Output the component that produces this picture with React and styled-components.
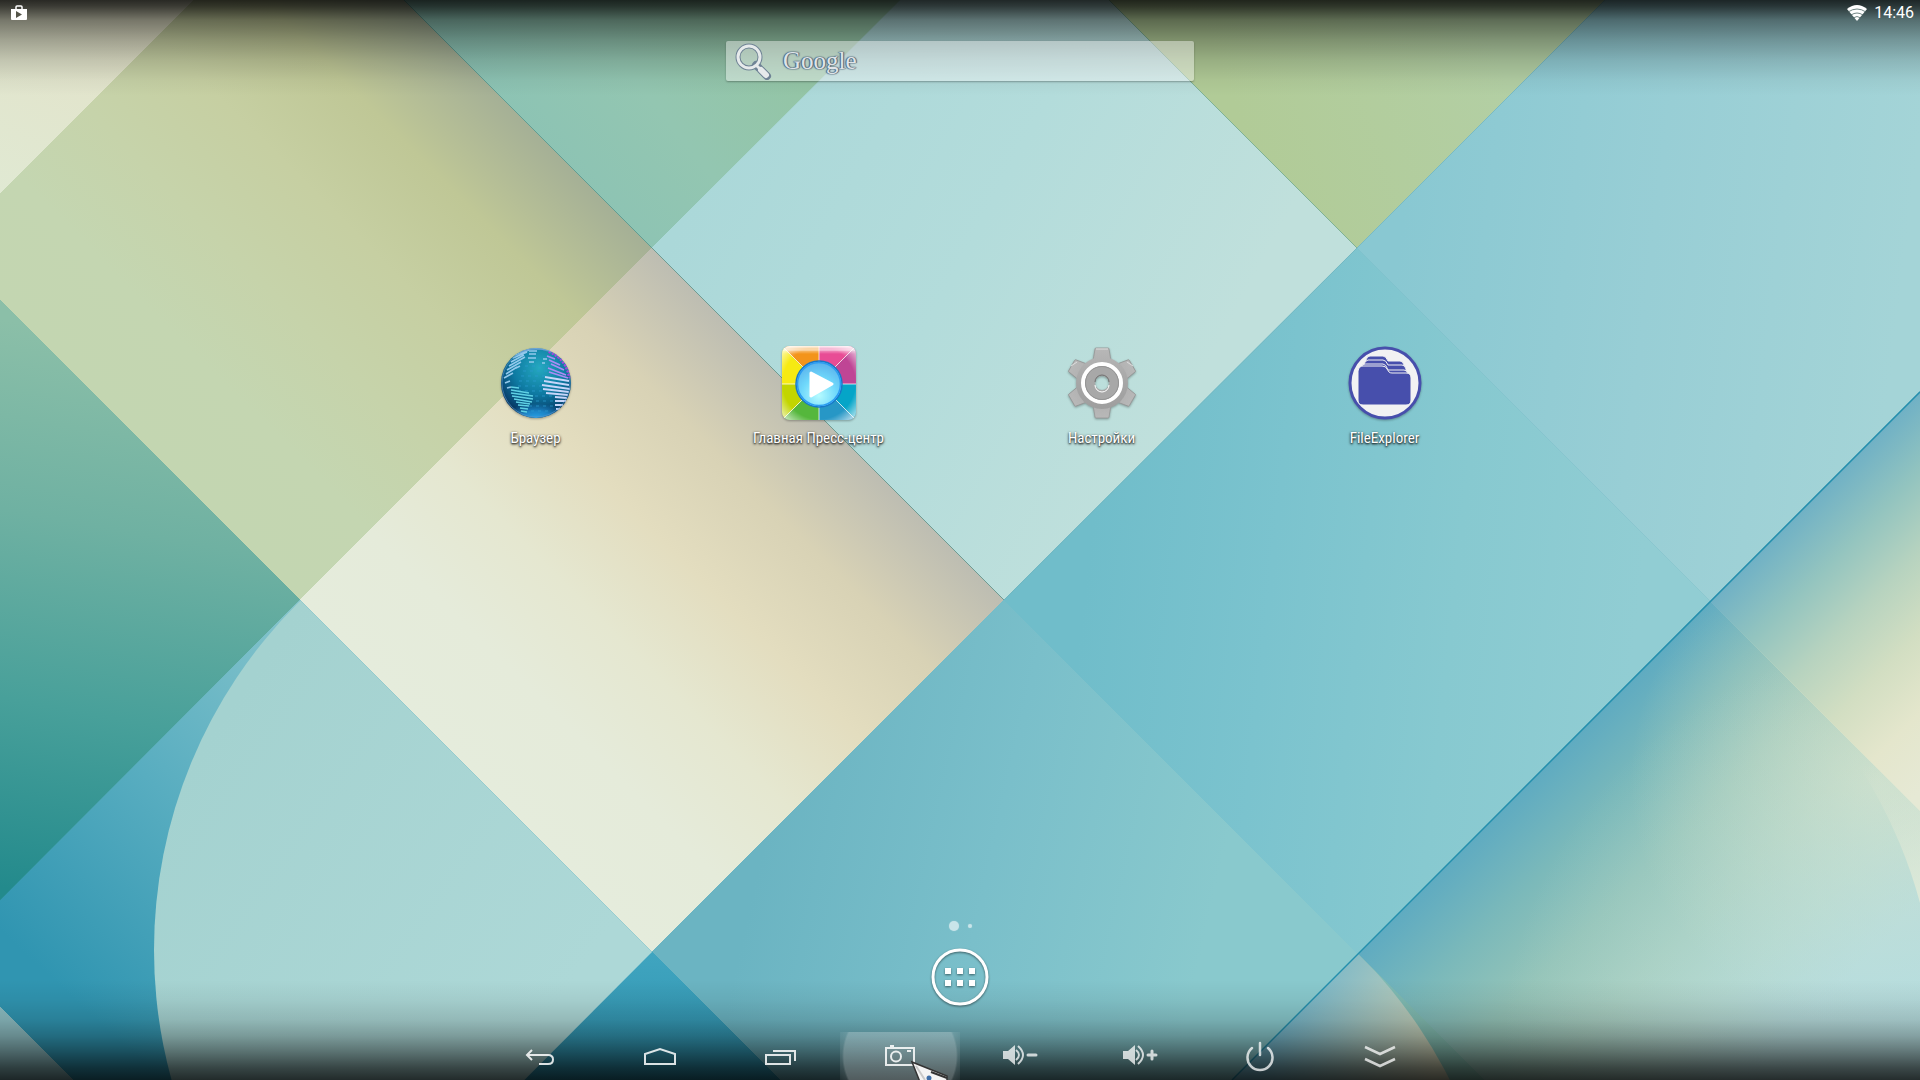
import React, { Component } from 'react';
import styled, { createGlobalStyle } from 'styled-components'

const GlobalStyle = createGlobalStyle`
  html, body, #root {
    height: 100%;
  }
  body {
    margin: 0;
    overflow: hidden;
    background: #7fc3cc;
    font-family: Roboto, "Noto Sans", sans-serif;
  }
`

const Screen = styled.div`
  position: relative;
  display: flex;
  flex-direction: column;
  min-height: 100%;
  color: #fff;
`

const WallpaperSvg = styled.svg`
  position: absolute;
  inset: 0;
  width: 100%;
  height: 100%;
`

// dark fades under the status bar and the navigation bar
const Scrim = styled.div`
  position: absolute;
  inset: 0;
  background:
    linear-gradient(to bottom, rgba(0,0,0,0.82) 0, rgba(0,0,0,0.74) 6px, rgba(0,0,0,0.48) 20px, rgba(0,0,0,0.29) 40px, rgba(0,0,0,0.14) 60px, rgba(0,0,0,0.04) 80px, transparent 96px),
    linear-gradient(to top, rgba(0,0,0,0.8) 0, rgba(0,0,0,0.68) 12px, rgba(0,0,0,0.47) 28px, rgba(0,0,0,0.28) 44px, rgba(0,0,0,0.14) 60px, rgba(0,0,0,0.05) 80px, transparent 100px);
`

const PlainButton = styled.button`
  border: 0;
  padding: 0;
  background: none;
  color: inherit;
  font: inherit;
  cursor: pointer;
`

const StatusBar = styled.header`
  position: relative;
  display: flex;
  align-items: center;
  justify-content: space-between;
  height: 25px;
  padding: 0 6px 0 11px;
`

const StatusGroup = styled.div`
  display: flex;
  align-items: center;
  gap: 7px;
`

const Clock = styled.time`
  font-size: 16px;
  line-height: 25px;
`

const Search = styled(PlainButton)`
  position: relative;
  display: flex;
  align-items: center;
  gap: 10px;
  align-self: center;
  width: 468px;
  height: 40px;
  margin-top: 16px;
  padding-left: 9px;
  border-radius: 2px;
  background: rgba(255,255,255,0.42);
  box-shadow: 0 1px 2px rgba(0,0,0,0.3);
`

const SearchLogo = styled.span`
  font-family: "Liberation Serif", serif;
  font-size: 25px;
  line-height: 36px;
  color: #dfe4e8;
  text-shadow: 0 0 2px #53677c, 0 0 1px #53677c, 1px 0 1px #53677c, -1px 0 1px #53677c;
`

const Workspace = styled.main`
  position: relative;
  display: grid;
  grid-template-columns: repeat(4, 283px);
  justify-content: center;
  align-content: start;
  flex: 1;
  padding-top: 265px;
`

const Shortcut = styled(PlainButton)`
  display: flex;
  flex-direction: column;
  align-items: center;
  gap: 7px;

  svg {
    filter: drop-shadow(0 1px 1px rgba(0,0,0,0.3));
  }
`

const Label = styled.span`
  font-family: "Roboto Condensed", "Liberation Sans Narrow", Roboto, sans-serif;
  font-size: 15px;
  line-height: 22px;
  text-shadow: 0 1px 2px rgba(0,0,0,0.8), 0 1px 3px rgba(0,0,0,0.7);
`

const Pages = styled.div`
  position: relative;
  display: flex;
  align-items: center;
  justify-content: center;
  gap: 9px;
  height: 12px;
`

const Dot = styled.span`
  width: ${props => props.$size}px;
  height: ${props => props.$size}px;
  border-radius: 50%;
  background: rgba(255,255,255,0.6);
  box-shadow: 0 0 1px rgba(255,255,255,0.5);
`

const AllApps = styled(PlainButton)`
  position: relative;
  align-self: center;
  width: 60px;
  height: 60px;
  margin: 15px 0 25px;

  svg {
    display: block;
    filter: drop-shadow(0 1px 1px rgba(0,0,0,0.5));
  }
`

const NavBar = styled.nav`
  position: relative;
  display: flex;
  justify-content: center;
  height: 48px;
`

const NavButton = styled(PlainButton)`
  display: flex;
  align-items: center;
  justify-content: center;
  width: 120px;
  background: ${props => props.$pressed
    ? 'radial-gradient(circle at 60px 24px, rgba(255,255,255,0.25) 56px, rgba(255,255,255,0.1) 58px, transparent 70px)'
    : 'none'};
`

const Pointer = styled.svg`
  position: absolute;
  left: 911px;
  bottom: 0;
  pointer-events: none;
`

const faces = [
  { id: 'a', pts: '-200,-200 394,-200 -200,394', g: [0, 194, 97, 0], s: ['#e0e9d3', '#e3e2c8'] },
  { id: 'b', pts: '-53,247 299,-105 652,248 300,600', g: [123, 424, 475, 72], s: ['#c3d6b1', '#c4d6b1', '#c6d3aa', '#c6cfa2', '#bfc796', '#a5b096'] },
  { id: 'c', pts: '299,-105 652,248 1005,-104', g: [560, 190, 760, 30], s: ['#8cc3b4', '#93c6b1', '#94c5a6'] },
  { id: 'd', pts: '652,248 1005,-104 1357,248 1004,600', g: [720, 150, 1190, 400], s: ['#abd8d9', '#b3dcdb', '#c0e0dc'] },
  { id: 'e', pts: '1005,-104 1357,248 1710,-104', g: [1250, 150, 1500, 60], s: ['#b1cb97', '#b3cfa4'] },
  { id: 'f', pts: '-53,247 300,600 -53,954', g: [60, 330, -40, 880], s: ['#8bbfa8', '#6fb1a2', '#48a09a', '#238a8c'] },
  { id: 'g', pts: '300,600 652,248 1004,600 652,952', g: [476, 776, 828, 424], s: ['#e5ecdc', '#e5ebda', '#e5e7d0', '#e3ddbf', '#d8d2b5', '#bdbdb2'] },
  { id: 'h', pts: '300,600 652,952 299,1306 -53,954', g: [290, 620, 0, 930], s: ['#83c3cb', '#58adc0', '#3095b1'] },
  { id: 'h0', pts: '-53,954 299,1306 -53,1306', g: [0, 1000, 150, 1080], s: ['#8ebfc4', '#8ebfc4'] },
  { id: 'i', pts: '652,952 1004,600 1358,954 1006,1306', g: [760, 860, 1200, 960], s: ['#6bb4c2', '#7abfca', '#89c9cd'] },
  { id: 'j', pts: '1004,600 1357,248 1710,601 1358,954', g: [1090, 540, 1640, 600], s: ['#70bdca', '#7bc3ce', '#87c9d0', '#91cdd3'] },
  { id: 'k', pts: '1357,248 1857,-252 2564,-252 1710,601', g: [1400, 240, 1900, 300], s: ['#89c8d2', '#98ced5', '#a4d4d7'] },
  { id: 'l', pts: '652,952 299,1306 1006,1306', g: [652, 952, 652, 1080], s: ['#40a5c0', '#2c90ac'] },
  { id: 'm', pts: '1358,954 1710,601 2415,1306 1710,1306', g: [1534, 778, 1790, 1034], s: ['#5fabc1', '#7bb9ba', '#95c4b8', '#a7cdbd', '#b3d5c8', '#b8d9d6'] },
  { id: 'n', pts: '1710,601 2564,-252 2415,1306', g: [1766, 546, 1966, 746], s: ['#70b1c5', '#93c4bf', '#b7d3bf', '#d2dec2', '#e4e6cc', '#e6e9d5'] },
  { id: 'o', pts: '1358,954 1710,1306 1006,1306', g: [1358, 954, 1520, 1080], s: ['#7ab7b4', '#8cc3b0'] },
]

const Wallpaper = () => (
  <WallpaperSvg viewBox="0 0 1920 1080" preserveAspectRatio="xMidYMid slice" aria-hidden="true">
    <defs>
      {faces.map(f => (
        <linearGradient key={f.id} id={`face-${f.id}`} gradientUnits="userSpaceOnUse" x1={f.g[0]} y1={f.g[1]} x2={f.g[2]} y2={f.g[3]}>
          {f.s.map((color, i) => <stop key={i} offset={i / (f.s.length - 1)} stopColor={color} />)}
        </linearGradient>
      ))}
      <linearGradient id="disc-left" gradientUnits="userSpaceOnUse" x1="200" y1="750" x2="560" y2="1000">
        <stop offset="0" stopColor="#a4d2d0" />
        <stop offset="1" stopColor="#add8d7" />
      </linearGradient>
      <linearGradient id="disc-mid" gradientUnits="userSpaceOnUse" x1="1290" y1="1010" x2="1430" y2="1080">
        <stop offset="0" stopColor="#74b5c9" />
        <stop offset="0.5" stopColor="#a5c5be" />
        <stop offset="1" stopColor="#d2d3b5" />
      </linearGradient>
      <linearGradient id="disc-right" gradientUnits="userSpaceOnUse" x1="1850" y1="770" x2="1900" y2="900">
        <stop offset="0" stopColor="#e6e9d3" stopOpacity="0" />
        <stop offset="1" stopColor="#e6ecd8" stopOpacity="0.75" />
      </linearGradient>
      <radialGradient id="haze" gradientUnits="userSpaceOnUse" cx="1920" cy="1060" r="420">
        <stop offset="0" stopColor="#b6e0e4" stopOpacity="0.75" />
        <stop offset="1" stopColor="#b6dfe0" stopOpacity="0" />
      </radialGradient>
      <radialGradient id="warm" gradientUnits="userSpaceOnUse" cx="1880" cy="780" r="250">
        <stop offset="0" stopColor="#e0e5c9" stopOpacity="0.75" />
        <stop offset="1" stopColor="#d4dfc4" stopOpacity="0" />
      </radialGradient>
      <clipPath id="clip-h"><polygon points="300,600 652,952 299,1306 -53,954" /></clipPath>
      <clipPath id="clip-m"><polygon points="1358,954 1710,601 2415,1306 1710,1306" /></clipPath>
      <clipPath id="clip-o"><polygon points="1358,954 1710,1306 1006,1306" /></clipPath>
    </defs>
    {faces.map(f => (
      <polygon key={f.id} points={f.pts} fill={`url(#face-${f.id})`} stroke={`url(#face-${f.id})`} />
    ))}
    <circle cx="644" cy="950" r="490" fill="url(#disc-left)" clipPath="url(#clip-h)" />
    <circle cx="1012" cy="1300" r="490" fill="url(#disc-mid)" clipPath="url(#clip-o)" />
    <g clipPath="url(#clip-m)">
      <circle cx="1880" cy="780" r="250" fill="url(#warm)" />
      <circle cx="1920" cy="1060" r="420" fill="url(#haze)" />
      <path d="M1794 685A490 490 0 0 1 1937 1030V828z" fill="url(#disc-right)" />
    </g>
    <path d="M404 0L1004 600" stroke="#4f8f86" strokeOpacity="0.7" />
    <path d="M1109 0L1357 248" stroke="#7fb295" />
    <path d="M1004 600L1357 248L1605 0" stroke="#6fb3bd" fill="none" strokeOpacity="0.7" />
    <path d="M1357 248L1710 601" stroke="#74b9c5" strokeOpacity="0.4" />
    <path d="M1232 1080L1920 392" stroke="#2490ad" strokeWidth="1.4" />
  </WallpaperSvg>
)

const GlobeIcon = () => (
  <svg width="74" height="74" viewBox="0 0 74 74">
    <defs>
      <radialGradient id="ocean" cx="0.55" cy="0.28" r="0.75">
        <stop offset="0" stopColor="#25a9c0" />
        <stop offset="0.5" stopColor="#0e7aa2" />
        <stop offset="0.85" stopColor="#07426f" />
        <stop offset="1" stopColor="#08284a" />
      </radialGradient>
      <radialGradient id="ocean-glow" cx="0.5" cy="0.75" r="0.5">
        <stop offset="0" stopColor="#2ba6ea" />
        <stop offset="0.5" stopColor="#1f8ed4" stopOpacity="0.85" />
        <stop offset="1" stopColor="#1c84c9" stopOpacity="0" />
      </radialGradient>
      <clipPath id="globe-clip"><circle cx="37" cy="37" r="35" /></clipPath>
    </defs>
    <circle cx="37" cy="37" r="35" fill="url(#ocean)" />
    <g clipPath="url(#globe-clip)" fill="none">
      <ellipse cx="37" cy="65" rx="32" ry="15" fill="url(#ocean-glow)" />
      <g stroke="#2b9bd0" strokeOpacity="0.75" strokeDasharray="3 4">
        <path d="M26 20h24M24 25h28M22 30h26M20 35h24M19 40h24M19 45h24M36 50h20M37 55h20M30 60h26M32 65h20" />
      </g>
      <g stroke="#93c9ec" strokeWidth="1.6">
        <path d="M16 9l14-5M14 12l14-6M12 16l13-7M10 20l16-9M8 24l14-8M7 28l11-7M5 32l9-5M6 37l5-2M8 42l4-1M17 22l4-2" />
        <path d="M30 5h8M30 8h7M29 12h8M30 16h5M44 13h4M43 17h3" />
      </g>
      <g stroke="#5fd0e4" strokeWidth="1.6">
        <path d="M12 41l8 1M12 44l18 3M12 47l22 3M13 50l21 3M15 53l18 3M17 56l14 2M19 59l11 1M21 62l8 1M22 65l6 1" />
      </g>
      <g stroke="#c7d6fa" strokeWidth="1.8">
        <path d="M46 31l24 4M45 35l25 4M43 39l28 4M44 43l26 3M47 47l22 2M56 51l12 1M56 55l11 0M56 59l8 0M57 63l4 0" />
      </g>
      <g stroke="#a98cf5" strokeWidth="1.8">
        <path d="M48 10l8 3M50 14l11 5M52 18l13 6M49 22l18 7M50 26l19 6" />
      </g>
      <path d="M50 5c12 5 19 14 21 27" stroke="#c32be4" strokeWidth="4" strokeDasharray="2 1.5" />
      <path d="M20 5c10-4 24-4 33 0" stroke="#8fb5ee" strokeWidth="3" strokeOpacity="0.8" />
    </g>
    <circle cx="37" cy="37" r="34" fill="none" stroke="#5b91c8" strokeOpacity="0.6" />
  </svg>
)

const MediaIcon = () => (
  <svg width="74" height="74" viewBox="0 0 74 74">
    <defs>
      <clipPath id="tile"><rect x="0" y="0" width="74" height="74" rx="8" /></clipPath>
      <radialGradient id="lens" cx="0.5" cy="0.75" r="0.7">
        <stop offset="0" stopColor="#b5fbff" />
        <stop offset="0.55" stopColor="#6fd8fb" />
        <stop offset="1" stopColor="#5cb4ec" />
      </radialGradient>
      <linearGradient id="tile-top" x1="0" y1="0" x2="0" y2="1">
        <stop offset="0" stopColor="#fff" stopOpacity="0.9" />
        <stop offset="1" stopColor="#fff" stopOpacity="0" />
      </linearGradient>
      <radialGradient id="tile-corner" cx="0.5" cy="0.5" r="0.72">
        <stop offset="0.68" stopColor="#fff" stopOpacity="0" />
        <stop offset="1" stopColor="#fff" stopOpacity="0.85" />
      </radialGradient>
    </defs>
    <g clipPath="url(#tile)">
      <path d="M37 38L0 0H37z" fill="#f3941b" />
      <path d="M37 38V0H74z" fill="#e84c95" />
      <path d="M37 38L74 0V38z" fill="#bf4595" />
      <path d="M37 38H74V74z" fill="#05a5c8" />
      <path d="M37 38L74 74H37z" fill="#2797c6" />
      <path d="M37 38V74H0z" fill="#55b73c" />
      <path d="M37 38L0 74V38z" fill="#c2d500" />
      <path d="M37 38H0V0z" fill="#f6ea12" />
      <path d="M0 0L74 74M74 0L0 74M37 0V74M0 38H74" stroke="#fff" strokeOpacity="0.75" />
      <rect width="74" height="74" fill="url(#tile-corner)" />
      <rect width="74" height="8" fill="url(#tile-top)" />
      <path d="M0 4H74" stroke="#fff" strokeOpacity="0.5" />
    </g>
    <circle cx="37" cy="38" r="23" fill="url(#lens)" stroke="#1878c8" strokeWidth="1.5" />
    <circle cx="37" cy="38" r="21.5" fill="none" stroke="#2b9cf2" strokeWidth="1.5" />
    <path d="M29 27L50 38L29 50z" fill="#fff" stroke="#fff" strokeWidth="3" strokeLinejoin="round" />
  </svg>
)

const GearIcon = () => (
  <svg width="74" height="74" viewBox="0 0 74 74">
    <defs>
      <linearGradient id="metal" gradientUnits="userSpaceOnUse" x1="37" y1="2" x2="37" y2="72">
        <stop offset="0" stopColor="#b8b8b8" />
        <stop offset="0.5" stopColor="#a6a6a6" />
        <stop offset="1" stopColor="#9c9c9c" />
      </linearGradient>
      <mask id="gear-hole">
        <rect width="74" height="74" fill="#fff" />
        <circle cx="37" cy="37" r="7" fill="#000" />
      </mask>
    </defs>
    <g mask="url(#gear-hole)">
      <g fill="url(#metal)" stroke="#959595" strokeWidth="0.8">
        {[0, 60, 120, 180, 240, 300].map(a => (
          <path key={a} d="M28 15L30 3Q30 2 31 2H43Q44 2 44 3L46 15z" transform={`rotate(${a} 37 37)`} />
        ))}
      </g>
      <circle cx="37" cy="37" r="26" fill="url(#metal)" />
      <path d="M31 3H43M6 20L12 16M68 20L62 16" stroke="#dedede" />
      <circle cx="37" cy="37" r="19" fill="none" stroke="#fff" strokeWidth="4" />
      <circle cx="37" cy="37" r="16.5" fill="#a8a8a8" stroke="#959595" />
    </g>
    <path d="M30 36A7 7 0 0 1 44 36" fill="none" stroke="#6e6e6e" />
    <path d="M30 39A7 7 0 0 0 44 39" fill="none" stroke="#fff" />
  </svg>
)

const FolderIcon = () => (
  <svg width="74" height="74" viewBox="0 0 74 74">
    <circle cx="37" cy="37" r="35" fill="#f2f2f3" stroke="#474fac" strokeWidth="3" />
    <g fill="#474fac" stroke="#f2f2f3">
      <path d="M18 14q1-4 4-4H35q3 0 5 5H52q3 0 4 4V40H18z" />
      <path d="M16 18q1-3 4-4H35q3 0 5 5H54q3 0 4 4V44H16z" />
      <path d="M13 22q1-4 4-4H35q3 0 5 6H56q3 0 4 4V46H13z" />
      <path d="M10 25q1-5 5-5H34q4 0 5 3l2 3q1 1 3 1H58q5 0 5 5V54q0 5-5 5H15q-5 0-5-5z" />
    </g>
  </svg>
)

const apps = [
  { name: 'Браузер', icon: <GlobeIcon /> },
  { name: 'Главная Пресс-центр', icon: <MediaIcon /> },
  { name: 'Настройки', icon: <GearIcon /> },
  { name: 'FileExplorer', icon: <FolderIcon /> },
]

const NavIcon = ({ children }) => (
  <svg width="40" height="40" viewBox="0 0 40 40" fill="none" stroke="#fff" strokeOpacity="0.85" strokeWidth="2">
    {children}
  </svg>
)

const Speaker = () => (
  <>
    <path d="M3 15h5l7-6v20l-7-6H3z" fill="#fff" fillOpacity="0.75" stroke="none" />
    <path d="M16 14q6 5 0 10M18 10q10 9 0 18" strokeOpacity="0.75" />
  </>
)

const navItems = [
  { name: 'Back', icon: <path d="M12 14L7 19L12 24M7 19H28q5 0 5 4.500t-5 4.500H19" /> },
  { name: 'Home', icon: <path d="M5 28V18L20 13L35 18V28z" /> },
  { name: 'Recent apps', icon: <path d="M6 19H30V28H6zM13 15H35V25" /> },
  {
    name: 'Screenshot',
    pressed: true,
    icon: (
      <>
        <path d="M6 12H34V29H6zM10 10H14" />
        <circle cx="16" cy="20.500" r="5" />
        <path d="M27 15H31" />
      </>
    ),
  },
  { name: 'Volume down', icon: <><Speaker /><path d="M28 19H36" strokeWidth="3" strokeLinecap="round" strokeOpacity="0.75" /></> },
  { name: 'Volume up', icon: <><Speaker /><path d="M28 19H36M32 15V23" strokeWidth="3" strokeLinecap="round" strokeOpacity="0.75" /></> },
  { name: 'Power', icon: <path d="M20 7V19M12 12A12.500 12.500 0 1 0 28 12" strokeWidth="2.500" strokeOpacity="0.75" strokeLinecap="round" /> },
  { name: 'Hide bar', icon: <path d="M5 11L20 18L35 11M5 23L20 30L35 23" strokeWidth="2.500" strokeOpacity="0.75" /> },
]

class App extends Component {

  render() {
    return (
      <Screen>
        <GlobalStyle />
        <Wallpaper />
        <Scrim />

        <StatusBar>
          <svg width="16" height="16" viewBox="0 0 16 16" aria-hidden="true">
            <path d="M5 5V2q0-1 1-1H10q1 0 1 1V5" fill="none" stroke="#fff" strokeWidth="1.500" />
            <path d="M0 4H16V14q0 1-1 1H1q-1 0-1-1z" fill="#fff" />
            <path d="M5 6L11 9.500L5 13z" fill="#555549" />
          </svg>
          <StatusGroup>
            <svg width="20" height="16" viewBox="0 0 20 16" aria-hidden="true">
              <path d="M10 16L0 4Q10-4 20 4z" fill="#fff" />
              <path d="M1 7Q10 1 19 7M4 10Q10 6 16 10M6 13Q10 10 14 13" fill="none" stroke="#4d6665" strokeOpacity="0.8" />
            </svg>
            <Clock>14:46</Clock>
          </StatusGroup>
        </StatusBar>

        <Search type="button">
          <svg width="38" height="38" viewBox="0 0 38 38" fill="none" aria-hidden="true">
            <circle cx="14" cy="15" r="11" stroke="#6f8395" strokeWidth="5" />
            <path d="M21 23L24 26M26 28L32 34" stroke="#6f8395" strokeWidth="8" strokeLinecap="round" />
            <circle cx="14" cy="15" r="11" stroke="#e6eaeb" strokeWidth="3" />
            <path d="M21 23L25 27" stroke="#e6eaeb" strokeWidth="3" />
            <path d="M26 28L31 33" stroke="#e6eaeb" strokeWidth="6" strokeLinecap="round" />
          </svg>
          <SearchLogo>Google</SearchLogo>
        </Search>

        <Workspace>
          {apps.map(app => (
            <Shortcut key={app.name} type="button">
              {app.icon}
              <Label>{app.name}</Label>
            </Shortcut>
          ))}
        </Workspace>

        <Pages>
          <Dot $size={10} />
          <Dot $size={4} />
        </Pages>
        <AllApps type="button" aria-label="Apps">
          <svg width="60" height="60" viewBox="0 0 60 60">
            <circle cx="30" cy="30" r="27" fill="none" stroke="#fff" strokeWidth="3" />
            <path d="M15 21h6v6h-6zM27 21h6v6h-6zM39 21h6v6h-6zM15 33h6v6h-6zM27 33h6v6h-6zM39 33h6v6h-6z" fill="#fff" />
          </svg>
        </AllApps>

        <NavBar>
          {navItems.map(item => (
            <NavButton key={item.name} type="button" aria-label={item.name} $pressed={item.pressed}>
              <NavIcon>{item.icon}</NavIcon>
            </NavButton>
          ))}
        </NavBar>

        <Pointer width="40" height="20" viewBox="0 0 40 20" aria-hidden="true">
          <path d="M1 2L36 16V22H9z" fill="#f4f4f4" stroke="#333" strokeWidth="1.500" />
          <path d="M20 12L36 18" stroke="#333" strokeWidth="2" />
          <path d="M5 6L14 20" stroke="#c9c9c9" strokeWidth="2" />
          <circle cx="18" cy="18" r="2.500" fill="#3f6ea8" />
        </Pointer>
      </Screen>
    );
  }
}

export default App;
